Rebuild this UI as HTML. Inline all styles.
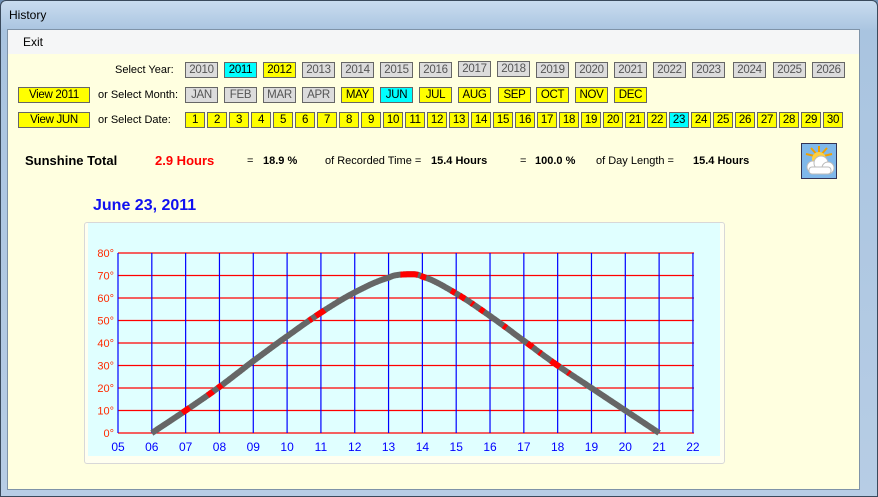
<!DOCTYPE html>
<html><head><meta charset="utf-8"><style>
*{margin:0;padding:0;box-sizing:border-box}
body{width:878px;height:497px;overflow:hidden;font-family:"Liberation Sans",sans-serif;background:#6e8fb3;position:relative}
.frame{position:absolute;left:0;top:0;width:878px;height:497px;background:linear-gradient(#c9dcef,#a9c4e0 30px,#b7cde5);border-radius:6px 6px 0 0;border:1px solid #3a4a5c}
.title{position:absolute;left:8px;top:7px;font-size:12px;color:#000}
.client{position:absolute;left:7px;top:29px;width:853px;height:461px;background:#ffffe0;border:1px solid #7f93a8}
.menu{position:absolute;left:0;top:0;width:100%;height:24px;background:#f5f6f7;font-size:12px}
.menu span{position:absolute;left:15px;top:5px}
.b{position:absolute;height:16px;border:1px solid #666;font-size:11.5px;text-align:center;line-height:14px;color:#000;background:#ffff00;letter-spacing:-0.3px}
.g{background:#dcdcdc;color:#555}
.c{background:#00ffff}
.lbl{position:absolute;font-size:11px;color:#000}
.s{position:absolute;font-size:11px;top:155px;font-weight:bold}
</style></head><body>
<div class="frame"><div class="title">History</div></div>
<div class="client">
<div class="menu"><span>Exit</span></div>
</div>
<div class="lbl" style="left:115px;top:64px">Select Year:</div>
<div class="lbl" style="left:98px;top:89px">or Select Month:</div>
<div class="lbl" style="left:98px;top:114px">or Select Date:</div>
<div class="b" style="left:18px;top:87px;width:72px">View 2011</div>
<div class="b" style="left:18px;top:112px;width:72px">View JUN</div>

<div class="b g" style="left:185px;top:62px;width:33px">2010</div>
<div class="b c" style="left:224px;top:62px;width:33px">2011</div>
<div class="b" style="left:263px;top:62px;width:33px">2012</div>
<div class="b g" style="left:302px;top:62px;width:33px">2013</div>
<div class="b g" style="left:341px;top:62px;width:33px">2014</div>
<div class="b g" style="left:380px;top:62px;width:33px">2015</div>
<div class="b g" style="left:419px;top:62px;width:33px">2016</div>
<div class="b g" style="left:458px;top:61px;width:33px">2017</div>
<div class="b g" style="left:497px;top:61px;width:33px">2018</div>
<div class="b g" style="left:536px;top:62px;width:33px">2019</div>
<div class="b g" style="left:575px;top:62px;width:33px">2020</div>
<div class="b g" style="left:614px;top:62px;width:33px">2021</div>
<div class="b g" style="left:653px;top:62px;width:33px">2022</div>
<div class="b g" style="left:692px;top:62px;width:33px">2023</div>
<div class="b g" style="left:733px;top:62px;width:33px">2024</div>
<div class="b g" style="left:773px;top:62px;width:33px">2025</div>
<div class="b g" style="left:812px;top:62px;width:33px">2026</div>

<div class="b g" style="left:185px;top:87px;width:33px">JAN</div>
<div class="b g" style="left:224px;top:87px;width:33px">FEB</div>
<div class="b g" style="left:263px;top:87px;width:33px">MAR</div>
<div class="b g" style="left:302px;top:87px;width:33px">APR</div>
<div class="b" style="left:341px;top:87px;width:33px">MAY</div>
<div class="b c" style="left:380px;top:87px;width:33px">JUN</div>
<div class="b" style="left:419px;top:87px;width:33px">JUL</div>
<div class="b" style="left:458px;top:87px;width:33px">AUG</div>
<div class="b" style="left:498px;top:87px;width:33px">SEP</div>
<div class="b" style="left:536px;top:87px;width:33px">OCT</div>
<div class="b" style="left:575px;top:87px;width:33px">NOV</div>
<div class="b" style="left:614px;top:87px;width:33px">DEC</div>

<div id="dates"></div>

<div class="s" style="left:25px;font-size:13px;top:153px">Sunshine Total</div>
<div class="s" style="left:155px;font-size:13px;top:153px;color:#f00">2.9 Hours</div>
<div class="s" style="left:247px;font-weight:normal">=</div>
<div class="s" style="left:263px">18.9 %</div>
<div class="s" style="left:325px;font-weight:normal">of Recorded Time =</div>
<div class="s" style="left:431px">15.4 Hours</div>
<div class="s" style="left:520px;font-weight:normal">=</div>
<div class="s" style="left:535px">100.0 %</div>
<div class="s" style="left:596px;font-weight:normal">of Day Length =</div>
<div class="s" style="left:693px">15.4 Hours</div>
<svg style="position:absolute;left:801px;top:143px" width="36" height="36">
<rect x="0.5" y="0.5" width="35" height="35" fill="#7fb8ea" stroke="#335"/>
<g stroke="#f0a000" stroke-width="2"><line x1="18" y1="14" x2="18" y2="3"/><line x1="18" y1="14" x2="26" y2="5"/><line x1="18" y1="14" x2="31" y2="11"/><line x1="18" y1="14" x2="10" y2="5"/><line x1="18" y1="14" x2="5" y2="11"/></g>
<circle cx="18" cy="16" r="7" fill="#ffd040"/>
<g fill="#fff" stroke="#bbb"><circle cx="12" cy="24" r="6"/><circle cx="20" cy="20" r="7"/><circle cx="27" cy="25" r="6"/><rect x="8" y="24" width="22" height="7" rx="3"/></g>
</svg>
<div style="position:absolute;left:93px;top:197px;font-size:16px;font-weight:bold;color:#1010f0">June 23, 2011</div>

<div style="position:absolute;left:84px;top:222px;width:641px;height:242px;border:1px solid #d8d8d8;background:#fffff0;border-radius:3px"></div>
<div style="position:absolute;left:88px;top:223px;width:632px;height:233px;background:#e0ffff"></div>
<svg id="ch" style="position:absolute;left:0;top:0" width="878" height="497"></svg>
<script>
var d='';for(var i=1;i<=30;i++){d+='<div class="b'+(i==23?' c':'')+'" style="left:'+(185+(i-1)*22)+'px;top:112px;width:20px">'+i+'</div>';}
document.getElementById('dates').innerHTML=d;
var s='';var X=function(h){return 118+(h-5)*33.82};var Y=function(a){return 433-a*2.25};
for(var a=0;a<=80;a+=10){s+='<line x1="118" x2="694" y1="'+Y(a)+'" y2="'+Y(a)+'" stroke="#f00" stroke-width="1.2"/>';s+='<text x="114" y="'+(Y(a)+4)+'" font-size="11" fill="#ff2a00" text-anchor="end" font-family="Liberation Sans">'+a+'°</text>';}
for(var h=5;h<=22;h++){s+='<line y1="253" y2="433" x1="'+X(h)+'" x2="'+X(h)+'" stroke="#00f" stroke-width="1.2"/>';s+='<text x="'+X(h)+'" y="451" font-size="12" fill="#00f" text-anchor="middle" font-family="Liberation Sans">'+(h<10?'0'+h:h)+'</text>';}
var pts=[[5,-10],[6,0],[7,10],[8,20.5],[9,32],[10,43],[11,53.5],[12,62.5],[13,69],[13.5,70.5],[14,69.5],[15,62],[16,52],[17,41],[18,30],[19,20],[20,10],[21,0],[22,-10]];
function alt(h){for(var i=1;i<pts.length-2;i++){if(h<=pts[i+1][0]){var p0=pts[i-1],p1=pts[i],p2=pts[i+1],p3=pts[i+2];var t=(h-p1[0])/(p2[0]-p1[0]);var t2=t*t,t3=t2*t;return 0.5*((2*p1[1])+(-p0[1]+p2[1])*t+(2*p0[1]-5*p1[1]+4*p2[1]-p3[1])*t2+(-p0[1]+3*p1[1]-3*p2[1]+p3[1])*t3);}}return 0;}
function seg(a,b){var r=[];for(var h=a;h<=b+1e-9;h+=0.02){r.push(X(h).toFixed(1)+','+Y(alt(h)).toFixed(1));}return r.join(' ');}
s+='<polyline points="'+seg(6,21)+'" fill="none" stroke="#666" stroke-width="6" stroke-linejoin="round"/>';
var red=[[6.9,7.1],[7.65,7.8],[7.95,8.05],[10.65,10.72],[10.85,11.1],[13.35,13.85],[13.95,14.1],[14.85,14.95],[15.1,15.25],[15.45,15.5],[15.7,15.8],[16.4,16.47],[17.1,17.25],[17.45,17.5],[17.8,18.05],[18.3,18.35]];
red.forEach(function(r){s+='<polyline points="'+seg(r[0],r[1]+0.02)+'" fill="none" stroke="#f00" stroke-width="6"/>';});
document.getElementById('ch').innerHTML=s;
</script>
</body></html>
